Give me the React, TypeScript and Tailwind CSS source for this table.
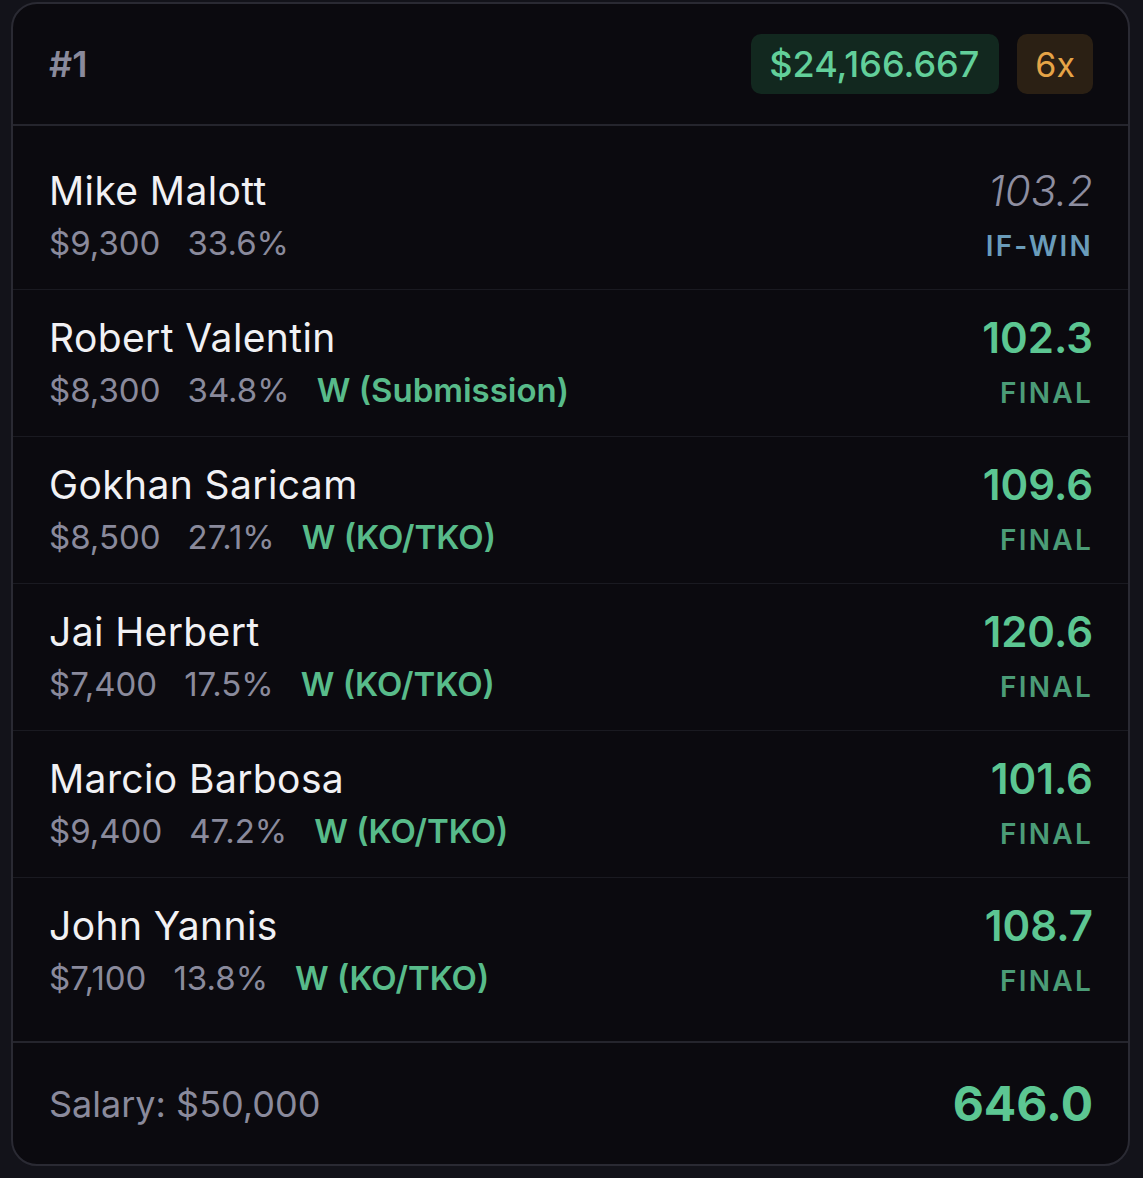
const fighters = [
  { name: 'Mike Malott', salary: '$9,300', own: '33.6%', result: '', score: '103.2', status: 'IF-WIN' },
  { name: 'Robert Valentin', salary: '$8,300', own: '34.8%', result: 'W (Submission)', score: '102.3', status: 'FINAL' },
  { name: 'Gokhan Saricam', salary: '$8,500', own: '27.1%', result: 'W (KO/TKO)', score: '109.6', status: 'FINAL' },
  { name: 'Jai Herbert', salary: '$7,400', own: '17.5%', result: 'W (KO/TKO)', score: '120.6', status: 'FINAL' },
  { name: 'Marcio Barbosa', salary: '$9,400', own: '47.2%', result: 'W (KO/TKO)', score: '101.6', status: 'FINAL' },
  { name: 'John Yannis', salary: '$7,100', own: '13.8%', result: 'W (KO/TKO)', score: '108.7', status: 'FINAL' },
];

function FighterRow({ f, last }: { f: (typeof fighters)[number]; last: boolean }) {
  const pending = f.status === 'IF-WIN';
  return (
    <div
      className={`flex items-start justify-between pl-[36px] pr-[35px] py-[26px] ${last ? '' : 'border-b border-[#1a1a21]'}`}
    >
      <div className="flex flex-col">
        <span className="text-[39px] leading-[44px] tracking-[0.01em] text-[#f1f1f4]">{f.name}</span>
        <div className="mt-[10px] flex gap-[27px] text-[33px] leading-[40px]">
          <span className="text-[#8a8a9c]">{f.salary}</span>
          <span className="text-[#8a8a9c]">{f.own}</span>
          {f.result && <span className="font-semibold text-[#58bb8a]">{f.result}</span>}
        </div>
      </div>
      <div className="flex flex-col items-end">
        {pending ? (
          <span className="text-[42px] font-light italic leading-[44px] text-[#8e8ea0]">{f.score}</span>
        ) : (
          <span className="text-[42px] font-semibold leading-[44px] text-[#5cc692]">{f.score}</span>
        )}
        <span
          className={`mt-[17px] text-[28px] font-semibold leading-[32px] tracking-[0.08em] ${pending ? 'text-[#6a9cba]' : 'text-[#4b9c77]'}`}
        >
          {f.status}
        </span>
      </div>
    </div>
  );
}

export default function App() {
  return (
    <div
      className="min-h-[1178px] bg-[#13131a] pb-[12px] pl-[11px] pr-[13px] pt-[2px]"
      style={{ fontFamily: 'Inter, "Noto Sans", sans-serif' }}
    >
      <div className="overflow-hidden rounded-[26px] border-2 border-[#2a2a33] bg-[#0b0a0f]">
        <div className="flex h-[122px] items-center justify-between border-b-2 border-[#25252d] pl-[36px] pr-[35px]">
          <span className="text-[36px] font-semibold text-[#8a8a9c]">#1</span>
          <div className="flex items-center gap-[18px]">
            <span className="flex h-[60px] items-center rounded-[10px] bg-[#12281f] pl-[18px] pr-[20px] text-[36px] font-medium text-[#62cf9a]">
              $24,166.667
            </span>
            <span className="flex h-[60px] items-center rounded-[10px] bg-[#2b2014] px-[18px] text-[34px] text-[#e6a447]">
              6x
            </span>
          </div>
        </div>

        <div className="py-[17px]">
          {fighters.map((f, i) => (
            <FighterRow key={f.name} f={f} last={i === fighters.length - 1} />
          ))}
        </div>

        <div className="flex h-[123px] items-center justify-between border-t-2 border-[#25252d] pl-[36px] pr-[35px]">
          <span className="text-[36px] text-[#8a8a9c]">Salary: $50,000</span>
          <span className="text-[48px] font-bold text-[#5cc692]">646.0</span>
        </div>
      </div>
    </div>
  );
}
